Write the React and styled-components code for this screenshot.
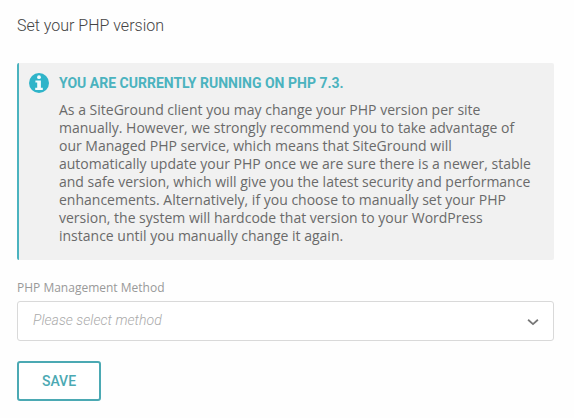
import styled, { createGlobalStyle } from "styled-components";

const GlobalStyle = createGlobalStyle`
  * {
    box-sizing: border-box;
  }

  body {
    margin: 0;
    background: #fefefe;
  }
`;

const Container = styled.main`
  width: 554px;
  padding: 14px 0 0 17px;
  font-family: "Open Sans", sans-serif;
`;

const Title = styled.h1`
  margin: 0 0 25px;
  font-family: Roboto, sans-serif;
  font-size: 16px;
  font-weight: 300;
  line-height: 24px;
  color: #444;
`;

const Notice = styled.section`
  display: flex;
  gap: 10px;
  height: 197px;
  padding: 10px 15px 0 10px;
  border-left: 2px solid #4bb3bf;
  border-radius: 2px;
  background: #f1f1f1;
`;

const InfoIcon = styled.svg`
  flex: none;
  width: 20px;
  height: 20px;
`;

const NoticeTitle = styled.h2`
  margin: 0 0 8px;
  font-family: Roboto, sans-serif;
  font-size: 14px;
  font-weight: 700;
  line-height: 20px;
  color: #4bb3bf;
`;

const NoticeText = styled.p`
  margin: 0;
  font-size: 14px;
  line-height: 18px;
  white-space: pre;
  color: #6a6a6a;
`;

const Label = styled.label`
  display: block;
  margin: 19px 0 5px;
  font-size: 12px;
  line-height: 17px;
  color: #999;
`;

const Select = styled.button`
  display: flex;
  align-items: center;
  justify-content: space-between;
  width: 100%;
  height: 40px;
  padding: 0 14px 0 15px;
  border: 1px solid #d9d9d9;
  border-radius: 3px;
  background: #fff;
`;

const Placeholder = styled.span`
  margin-bottom: 2px;
  font-family: Roboto, sans-serif;
  font-size: 14px;
  font-style: italic;
  font-weight: 300;
  line-height: 20px;
  letter-spacing: 0.05px;
  color: #aaa;
`;

const Chevron = styled.svg`
  width: 12px;
  height: 8px;
  margin-top: 2px;
`;

const SaveButton = styled.button`
  width: 84px;
  height: 40px;
  margin-top: 20px;
  padding: 0;
  border: 2px solid #4ba9b3;
  border-radius: 3px;
  background: #fff;
  font-family: Roboto, sans-serif;
  font-size: 14px;
  font-weight: 500;
  color: #4ba9b3;
`;

const noticeLines = [
  "As a SiteGround client you may change your PHP version per site",
  "manually. However, we strongly recommend you to take advantage of",
  "our Managed PHP service, which means that SiteGround will",
  "automatically update your PHP once we are sure there is a newer, stable",
  "and safe version, which will give you the latest security and performance",
  "enhancements. Alternatively, if you choose to manually set your PHP",
  "version, the system will hardcode that version to your WordPress",
  "instance until you manually change it again.",
];

export default function App() {
  return (
    <>
      <GlobalStyle />
      <Container>
        <Title>Set your PHP version</Title>

        <Notice>
          <InfoIcon viewBox="0 0 20 20">
            <circle cx="10" cy="10" r="10" fill="#2fb4c9" />
            <circle cx="10" cy="4.2" r="1.9" fill="#f4fbfc" />
            <path
              d="M6.4 7.4h5.5v7.3h1.9v2.2H6.2v-2.2h2V9.5H6.4z"
              fill="#f4fbfc"
            />
          </InfoIcon>
          <div>
            <NoticeTitle>YOU ARE CURRENTLY RUNNING ON PHP 7.3.</NoticeTitle>
            <NoticeText>{noticeLines.join("\n")}</NoticeText>
          </div>
        </Notice>

        <Label htmlFor="method">PHP Management Method</Label>
        <Select id="method" type="button">
          <Placeholder>Please select method</Placeholder>
          <Chevron viewBox="0 0 12 8" fill="none">
            <path d="M1.1 1.8 6 6.1l4.9-4.3" stroke="#777" strokeWidth="1.8" />
          </Chevron>
        </Select>

        <SaveButton type="button">SAVE</SaveButton>
      </Container>
    </>
  );
}
